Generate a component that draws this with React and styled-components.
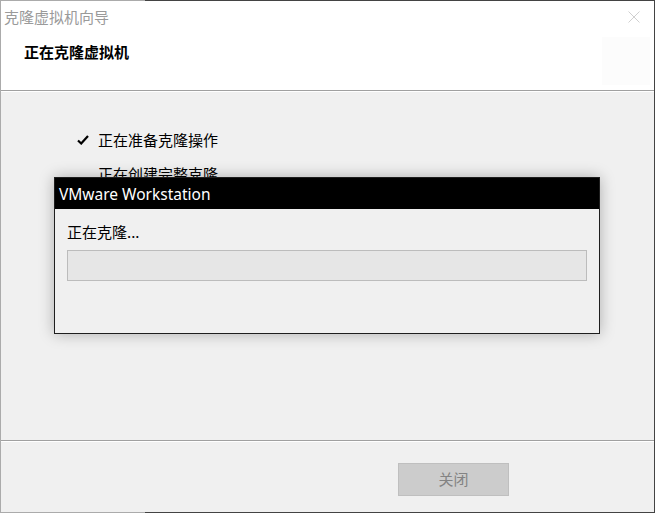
import React from "react";
import styled, { createGlobalStyle } from "styled-components";

const Global = createGlobalStyle`
  html, body { margin: 0; padding: 0; background: #ffffff; }
  body { font-family: "Noto Sans CJK SC", "Noto Sans", sans-serif; }
`;

const Window = styled.div`
  position: relative;
  box-sizing: border-box;
  width: 655px;
  height: 513px;
  display: flex;
  flex-direction: column;
  border: 1px solid;
  border-image: linear-gradient(to right, #ababab 145px, #434343 145px) 1;
  background: #f0f0f0;
  overflow: hidden;
`;

const Header = styled.div`
  height: 89px;
  background: #ffffff;
  display: flex;
  flex-direction: column;
`;

const TitleBar = styled.div`
  height: 32px;
  display: flex;
  align-items: center;
  justify-content: space-between;
  padding: 0 14px 0 3px;
`;

const TitleText = styled.span`
  font-size: 15px;
  line-height: 20px;
  color: #9a9a9a;
  font-family: "Noto Sans CJK SC", sans-serif;
`;

const CloseIcon = styled.svg`
  width: 12px;
  height: 12px;
  display: block;
`;

const HeaderMain = styled.div`
  flex: 1;
  display: flex;
  justify-content: space-between;
  align-items: flex-start;
  padding: 0 4px 0 23px;
`;

const Heading = styled.h1`
  margin: 9px 0 0;
  font-size: 15px;
  line-height: 20px;
  font-weight: 700;
  color: #000;
  font-family: "Noto Sans CJK SC", sans-serif;
`;

const IconBox = styled.div`
  width: 48px;
  height: 48px;
  margin-top: 4px;
  background: #fcfcfc;
`;

const Etched = styled.div`
  height: 1px;
  background: #a0a0a0;
  border-bottom: 1px solid #ffffff;
`;

const Content = styled.div`
  flex: 1;
  padding: 38px 0 0 76px;
  display: flex;
  flex-direction: column;
  gap: 14px;
`;

const Step = styled.div`
  display: flex;
  align-items: center;
  height: 20px;
  font-size: 15px;
  line-height: 20px;
  color: #000;
`;

const CheckSlot = styled.span`
  width: 21px;
  display: flex;
  align-items: center;
`;

const Footer = styled.div`
  height: 70px;
  display: flex;
  justify-content: flex-end;
  align-items: flex-start;
  padding: 21px 145px 0 0;
  box-sizing: border-box;
`;

const Button = styled.button`
  width: 111px;
  height: 33px;
  box-sizing: border-box;
  background: #cccccc;
  border: 1px solid #bfbfbf;
  color: #838383;
  font-size: 15px;
  line-height: 20px;
  font-family: "Noto Sans CJK SC", sans-serif;
  padding: 0 0 2px;
`;

const Modal = styled.div`
  position: absolute;
  left: 53px;
  top: 176px;
  width: 546px;
  height: 157px;
  box-sizing: border-box;
  border: 1px solid #1e1e1e;
  background: #f0f0f0;
  box-shadow: 0 0 14px rgba(0, 0, 0, 0.28);
  display: flex;
  flex-direction: column;
`;

const ModalTitle = styled.div`
  height: 31px;
  background: #000;
  color: #fff;
  font-family: "Noto Sans", "Open Sans", sans-serif;
  font-size: 15.5px;
  display: flex;
  align-items: center;
  padding-left: 4px;
`;

const ModalBody = styled.div`
  padding: 13px 12px 0 12px;
  display: flex;
  flex-direction: column;
`;

const ModalText = styled.div`
  font-size: 15px;
  line-height: 20px;
  color: #000;
`;

const Progress = styled.div`
  margin-top: 8px;
  height: 31px;
  box-sizing: border-box;
  background: #e6e6e6;
  border: 1px solid #bcbcbc;
`;

export default function App() {
  return (
    <>
      <Global />
      <Window>
        <Header>
          <TitleBar>
            <TitleText>克隆虚拟机向导</TitleText>
            <CloseIcon viewBox="0 0 12 12">
              <path d="M0.5 0.5 L11.5 11.5 M11.5 0.5 L0.5 11.5" stroke="#d0d0d0" strokeWidth="1" fill="none" />
            </CloseIcon>
          </TitleBar>
          <HeaderMain>
            <Heading>正在克隆虚拟机</Heading>
            <IconBox />
          </HeaderMain>
        </Header>
        <Etched />
        <Content>
          <Step>
            <CheckSlot>
              <svg width="12" height="10" viewBox="0 0 12 10">
                <path d="M1 5.5 L4.2 8.5 L11 1" stroke="#000" strokeWidth="2.2" fill="none" />
              </svg>
            </CheckSlot>
            正在准备克隆操作
          </Step>
          <Step>
            <CheckSlot />
            正在创建完整克隆
          </Step>
        </Content>
        <Etched />
        <Footer>
          <Button disabled>关闭</Button>
        </Footer>
        <Modal>
          <ModalTitle>VMware Workstation</ModalTitle>
          <ModalBody>
            <ModalText>正在克隆...</ModalText>
            <Progress />
          </ModalBody>
        </Modal>
      </Window>
    </>
  );
}
